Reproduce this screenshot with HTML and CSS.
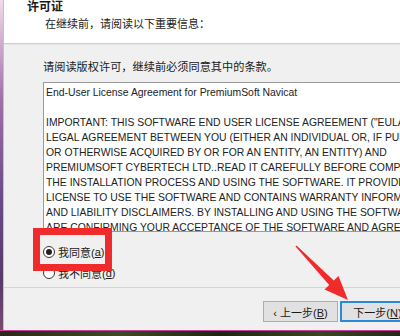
FILE: index.html
```html
<!DOCTYPE html>
<html lang="zh-CN">
<head>
    <meta charset="UTF-8">
    <title>许可证</title>
    <link rel="stylesheet" href="styles.css">
</head>
<body>
    <div class="screen">
        <div class="desk-row">
            <div class="desk-edge"></div>
            <div class="window">
                <header class="wizard-header">
                    <h1>许可证</h1>
                    <p>在继续前，请阅读以下重要信息：</p>
                </header>

                <section class="wizard-body">
                    <p class="prompt">请阅读版权许可，继续前必须同意其中的条款。</p>
                    <div class="license-box">
<pre>End-User License Agreement for PremiumSoft Navicat

IMPORTANT: THIS SOFTWARE END USER LICENSE AGREEMENT ("EULA") IS A
LEGAL AGREEMENT BETWEEN YOU (EITHER AN INDIVIDUAL OR, IF PURCHASED
OR OTHERWISE ACQUIRED BY OR FOR AN ENTITY, AN ENTITY) AND
PREMIUMSOFT CYBERTECH LTD..READ IT CAREFULLY BEFORE COMPLETING
THE INSTALLATION PROCESS AND USING THE SOFTWARE. IT PROVIDES A
LICENSE TO USE THE SOFTWARE AND CONTAINS WARRANTY INFORMATION
AND LIABILITY DISCLAIMERS. BY INSTALLING AND USING THE SOFTWARE, YOU
ARE CONFIRMING YOUR ACCEPTANCE OF THE SOFTWARE AND AGREEING</pre>
                    </div>
                    <div class="choices">
                        <label class="choice"><span class="radio checked"></span>我同意(<u>a</u>)</label>
                        <label class="choice"><span class="radio"></span>我不同意(<u>d</u>)</label>
                    </div>
                </section>

                <footer class="wizard-footer">
                    <button class="btn">‹ 上一步(<u>B</u>)</button>
                    <button class="btn btn-default">下一步(<u>N</u>)</button>
                </footer>
            </div>
        </div>
        <div class="desk-bottom"></div>

        <!-- annotations drawn over the screenshot -->
        <div class="highlight-box"></div>
        <svg class="arrow" width="400" height="336" viewBox="0 0 400 336">
            <polygon points="295.5,246.5 296.5,245.5 333.8,280.4 338.5,276 348,300 324.5,289.5 329.2,285"/>
        </svg>
    </div>
</body>
</html>
```

FILE: styles.css
```css
/* General */
body {
    margin: 0;
    padding: 0;
    font-family: "Liberation Sans", "Noto Sans CJK SC", sans-serif;
    color: #1a1a1a;
}

.screen {
    position: relative;
    width: 400px;
    height: 336px;
    overflow: hidden;
    display: flex;
    flex-direction: column;
}

.desk-row {
    display: flex;
    height: 330px;
}

.desk-edge {
    width: 3px;
    background: linear-gradient(#f0dcea, #a070a8 30%, #6a4c88 60%, #553a6a 85%, #7a4a70);
}

.desk-bottom {
    flex: 1;
    border-top: 1px solid #c8409c;
    background: linear-gradient(90deg, #2a2818, #3c4a24 30%, #1e2414 55%, #3a4420 80%, #24281a);
}

/* Wizard window */
.window {
    flex: 1;
    display: flex;
    flex-direction: column;
    overflow: hidden;
    background: #f0f0f0;
    border-left: 1px solid #d8b4d0;
}

.wizard-header {
    height: 44px;
    box-sizing: border-box;
    background: #ffffff;
    border-bottom: 1px solid #cfcfcf;
    padding-left: 23px;
}

.wizard-header h1 {
    margin: 0;
    font-size: 12px;
    line-height: 12px;
    font-weight: bold;
    font-family: "Noto Sans CJK SC", sans-serif;
}

.wizard-header p {
    margin: 4px 0 0 18px;
    font-size: 11px;
    line-height: 14px;
    font-family: "Noto Sans CJK SC", sans-serif;
}

.wizard-body {
    height: 244px;
    box-sizing: border-box;
    border-top: 1px solid #e6e6e6;
    border-bottom: 1px solid #d4d4d4;
    padding: 14px 0 0 39px;
}

.prompt {
    margin: 0;
    font-size: 11.2px;
    line-height: 14px;
    font-family: "Noto Sans CJK SC", sans-serif;
}

.license-box {
    margin-top: 9px;
    width: 400px;
    height: 150px;
    box-sizing: border-box;
    overflow: hidden;
    background: #ffffff;
    border: 1px solid #9a9a9a;
    padding: 2px 2px;
}

.license-box pre {
    margin: 0;
    font-family: "Liberation Sans", Arial, sans-serif;
    font-size: 10.4px;
    line-height: 15px;
    color: #222;
}

/* Radio choices */
.choices {
    margin-top: 10px;
    display: flex;
    flex-direction: column;
    gap: 1px;
}

.choice {
    display: flex;
    align-items: center;
    height: 20px;
    font-size: 11px;
    font-family: "Liberation Sans", "Noto Sans CJK SC", sans-serif;
    white-space: pre;
}

.radio {
    width: 12px;
    height: 12px;
    margin-right: 3px;
    box-sizing: border-box;
    border: 1px solid #333;
    border-radius: 50%;
    background: #fff;
    display: flex;
    align-items: center;
    justify-content: center;
}

.radio.checked::after {
    content: "";
    width: 6px;
    height: 6px;
    border-radius: 50%;
    background: #222;
}

/* Buttons */
.wizard-footer {
    display: flex;
    gap: 2px;
    padding: 13px 0 0 259px;
}

.btn {
    flex: none;
    width: 75px;
    height: 21px;
    padding: 0;
    background: #e1e1e1;
    border: 1px solid #adadad;
    font-family: "Liberation Sans", "Noto Sans CJK SC", sans-serif;
    font-size: 11px;
    color: #1a1a1a;
}

.btn-default {
    border: 2px solid #2a8ad8;
}

/* Annotations */
.highlight-box {
    position: absolute;
    left: 33px;
    top: 228px;
    width: 79px;
    height: 43px;
    box-sizing: border-box;
    border: 7px solid #ef2b2b;
}

.arrow {
    position: absolute;
    left: 0;
    top: 0;
}

.arrow polygon {
    fill: #ef2b2b;
}
```
